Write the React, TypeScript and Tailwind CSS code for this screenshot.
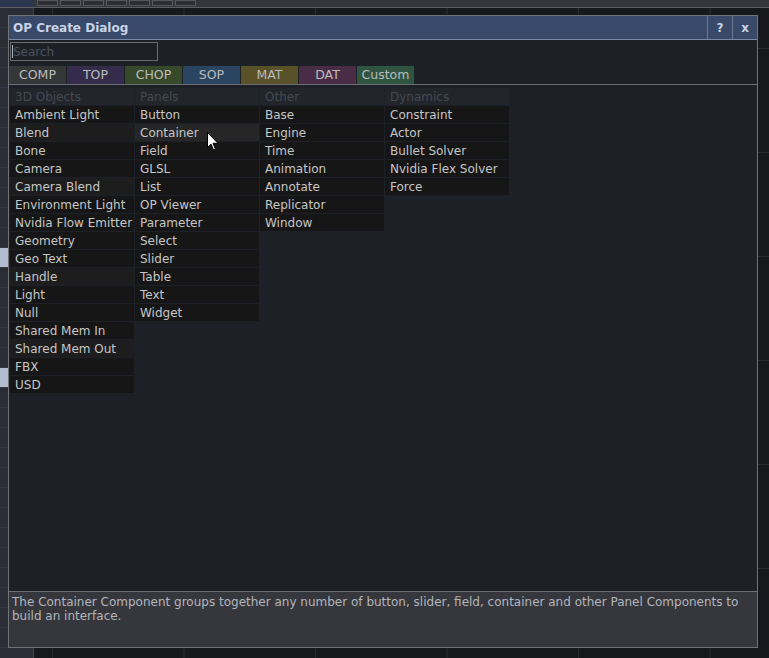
const columns = [
  {
    title: "3D Objects",
    items: ["Ambient Light", "Blend", "Bone", "Camera", "Camera Blend", "Environment Light", "Nvidia Flow Emitter", "Geometry", "Geo Text", "Handle", "Light", "Null", "Shared Mem In", "Shared Mem Out", "FBX", "USD"],
  },
  {
    title: "Panels",
    items: ["Button", "Container", "Field", "GLSL", "List", "OP Viewer", "Parameter", "Select", "Slider", "Table", "Text", "Widget"],
  },
  {
    title: "Other",
    items: ["Base", "Engine", "Time", "Animation", "Annotate", "Replicator", "Window"],
  },
  {
    title: "Dynamics",
    items: ["Constraint", "Actor", "Bullet Solver", "Nvidia Flex Solver", "Force"],
  },
];

// ops drawn with the lighter row shade
const lighter = ["Blend", "Camera Blend", "Handle", "Shared Mem Out"];

const tabs = [
  { name: "COMP", bg: "bg-[#353637]" },
  { name: "TOP", bg: "bg-[#342c4a]" },
  { name: "CHOP", bg: "bg-[#36492a]" },
  { name: "SOP", bg: "bg-[#2a4562]" },
  { name: "MAT", bg: "bg-[#595127]" },
  { name: "DAT", bg: "bg-[#4b2c47]" },
  { name: "Custom", bg: "bg-[#2f5541]" },
];

function Cursor() {
  return (
    <svg className="absolute left-[207px] top-[132px]" width="12" height="19" viewBox="0 0 12 19">
      <path d="M0.5 0.5 L0.5 15.5 L4 12 L6.5 18 L8.5 17.2 L6 11.3 L11 11.3 Z" fill="#fff" stroke="#000" strokeWidth="1" />
    </svg>
  );
}

export default function App() {
  return (
    <div className="relative w-[769px] h-[658px] overflow-hidden bg-[#17181c] [font-family:'DejaVu_Sans',sans-serif]">
      {/* background: touchdesigner editor behind the dialog */}
      <div className="flex flex-col h-full">
        <div className="flex h-[8px] border-b border-[#5c5e63] bg-[#34363c]">
          <div className="w-[34px] bg-[#2d3850]" />
          <div className="flex gap-[2px] pl-[3px]">
            {[0, 1, 2, 3, 4, 5, 6].map((i) => (
              <div key={i} className="w-[21px] h-[6px] border border-[#55575c] bg-[#2c2e33]" />
            ))}
          </div>
        </div>
        <div className="flex flex-1">
          <div className="w-[34px] flex flex-col bg-[#2a2d35] border-r border-[#44464c]">
            {Array.from({ length: 32 }).map((_, i) => (
              <div key={i} className={`h-[20px] border-b border-[#34373f] ${i === 12 || i === 18 ? "bg-[#b3bdd2]" : ""}`} />
            ))}
          </div>
          <div className="flex-1 bg-[#17181c] bg-[linear-gradient(to_right,#2a2c31_1px,transparent_1px),linear-gradient(to_bottom,#2a2c31_1px,transparent_1px)] bg-[size:131.5px_104px] bg-[position:18px_40px]" />
        </div>
      </div>

      {/* dialog */}
      <div className="absolute left-[8px] top-[15px] w-[750px] h-[633px] flex flex-col border border-[#707276] bg-[#1e2028]">
        <div className="flex h-[24px] items-stretch bg-[#384969] border-b border-[#7c89a6]">
          <div className="flex-1 flex items-center pl-[4px] text-[12px] font-bold text-[#c9d3e8]">OP Create Dialog</div>
          <div className="w-[25px] flex items-center justify-center border-l border-[#6c7894] text-[12px] font-bold text-[#c9d3e8]">?</div>
          <div className="w-[25px] flex items-center justify-center border-l border-[#6c7894] text-[12px] font-bold text-[#c9d3e8]">x</div>
        </div>
        <div className="px-[1px] pt-[2px] h-[26px]">
          <div className="w-[148px] h-[19px] border border-[#6a6c72] flex items-center pl-[1px] text-[12px] text-[#4c515d]">
            <span className="w-px h-[13px] bg-[#aeb2bb]" />
            Search
          </div>
        </div>
        <div className="flex h-[19px] border-b border-[#6c6e73]">
          {tabs.map((t) => (
            <div key={t.name} className={`w-[57px] mr-px flex items-center justify-center text-[12.5px] text-[#bcbcbc] ${t.bg}`}>
              {t.name}
            </div>
          ))}
        </div>
        <div className="flex-1 flex gap-px pl-[1px] pt-[3px]">
          {columns.map((col) => (
            <div key={col.title} className="w-[124px] flex flex-col gap-px">
              <div className="h-[17px] flex items-center pl-[5px] text-[12px] text-[#454952] bg-[#22252c]">{col.title}</div>
              {col.items.map((item) => (
                <div
                  key={item}
                  className={`h-[17px] flex items-center pl-[5px] text-[12px] text-[#c6c6c6] whitespace-nowrap ${
                    item === "Container" ? "bg-[#262626]" : lighter.includes(item) ? "bg-[#1d1d1e]" : "bg-[#161616]"
                  }`}
                >
                  {item}
                </div>
              ))}
            </div>
          ))}
        </div>
        <div className="h-[56px] border-t border-[#6c6e73] bg-[#36373c] px-[3px] pt-[3px] text-[12px] leading-[14px] text-[#b3b5bd]">
          The Container Component groups together any number of button, slider, field, container and other Panel Components to build an interface.
        </div>
      </div>
      <Cursor />
    </div>
  );
}
